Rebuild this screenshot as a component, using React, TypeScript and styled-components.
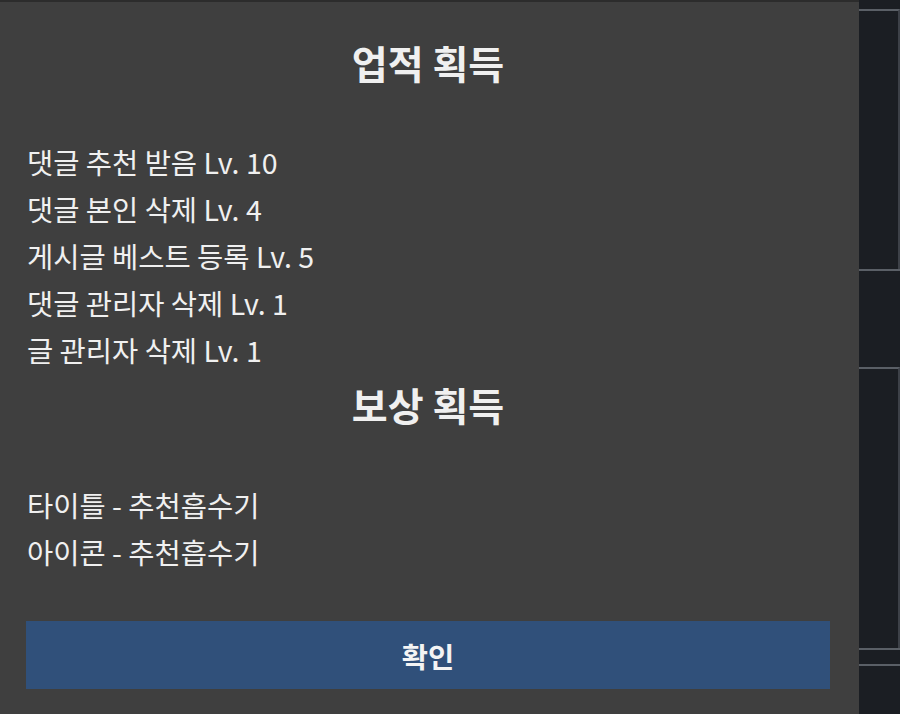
import React from 'react'
import styled, { createGlobalStyle } from 'styled-components'

const GlobalStyle = createGlobalStyle`
  html, body {
    margin: 0;
    padding: 0;
    background: #1b1e23;
  }
  body {
    font-family: 'Noto Sans CJK KR', 'Noto Sans', sans-serif;
  }
`

const Screen = styled.div`
  display: flex;
  width: 900px;
  height: 714px;
  overflow: hidden;
`

const Modal = styled.div`
  width: 859px;
  flex: none;
  box-sizing: border-box;
  padding: 0 29px 0 26px;
  background: #3f3f3f;
  border-top: 2px solid #2c2c2c;
  color: #f2f2f2;
  display: flex;
  flex-direction: column;
`

const Title = styled.h2<{ top: number }>`
  margin: ${({ top }) => top}px 0 0;
  font-size: 39px;
  font-weight: 700;
  line-height: 48px;
  text-align: center;
  color: #f0f0f0;
`

const List = styled.ul<{ top: number }>`
  list-style: none;
  margin: ${({ top }) => top}px 0 0;
  padding: 0 0 0 1px;
`

const Item = styled.li`
  font-size: 28.5px;
  line-height: 47px;
  color: #f0f0f0;
`

const ConfirmButton = styled.button`
  margin-top: 46px;
  height: 68px;
  width: 100%;
  border: none;
  background: #30507a;
  color: #f4f4f4;
  font-family: inherit;
  font-size: 28.5px;
  font-weight: 700;
  cursor: pointer;
`

const Side = styled.div`
  flex: 1;
  display: flex;
  flex-direction: column;
  background: #1b1e23;
`

const Block = styled.div<{ h: number; edge?: boolean }>`
  height: ${({ h }) => h}px;
  flex: none;
  border-top: 2px solid #5a5f66;
  border-right: ${({ edge }) => (edge ? '2px solid #3d4148' : 'none')};
`

const TopGap = styled.div`
  height: 9px;
  flex: none;
`

const achievements = [
  '댓글 추천 받음 Lv. 10',
  '댓글 본인 삭제 Lv. 4',
  '게시글 베스트 등록 Lv. 5',
  '댓글 관리자 삭제 Lv. 1',
  '글 관리자 삭제 Lv. 1',
]

const rewards = ['타이틀 - 추천흡수기', '아이콘 - 추천흡수기']

export default function App() {
  return (
    <>
      <GlobalStyle />
      <Screen>
        <Modal>
          <Title top={36}>업적 획득</Title>
          <List top={52}>
            {achievements.map((a) => (
              <Item key={a}>{a}</Item>
            ))}
          </List>
          <Title top={7}>보상 획득</Title>
          <List top={53}>
            {rewards.map((r) => (
              <Item key={r}>{r}</Item>
            ))}
          </List>
          <ConfirmButton>확인</ConfirmButton>
        </Modal>
        <Side>
          <TopGap />
          <Block h={258} edge />
          <Block h={96} />
          <Block h={279} edge />
          <Block h={14} />
          <Block h={60} />
        </Side>
      </Screen>
    </>
  )
}
